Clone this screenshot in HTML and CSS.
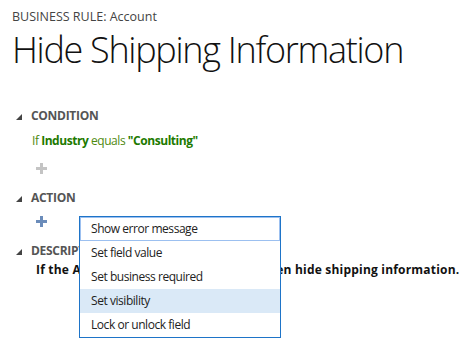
FILE: index.html
```html
<!DOCTYPE html>
<html>
<head>
  <title>Business Rule: Account</title>
  <link rel="stylesheet" href="styles.css">
</head>
<body>
  <div class="entity">BUSINESS RULE: Account</div>
  <h1>Hide Shipping Information</h1>

  <div class="section first">
    <div class="section-head"><span class="caret"></span>CONDITION</div>
    <div class="section-body">
      <p class="condition">If <b>Industry</b> equals <b>"Consulting"</b></p>
      <span class="plus plus-off"></span>
    </div>
  </div>

  <div class="section">
    <div class="section-head"><span class="caret"></span>ACTION</div>
    <div class="section-body action-body">
      <span class="plus plus-on"></span>
      <ul class="menu">
        <li class="focus">Show error message</li>
        <li>Set field value</li>
        <li>Set business required</li>
        <li class="hover">Set visibility</li>
        <li>Lock or unlock field</li>
      </ul>
    </div>
  </div>

  <div class="section">
    <div class="section-head"><span class="caret"></span>DESCRIPTION</div>
    <div class="section-body">
      <p class="description">If the Account industry is consulting then hide shipping information.</p>
    </div>
  </div>
</body>
</html>
```

FILE: styles.css
```css
html, body { height: 100%; }
body { margin: 0; padding: 9px 12px 0; box-sizing: border-box; font-family: "Open Sans", "Noto Sans", sans-serif; color: #333; background: #fff; }
.entity { font-size: 12.5px; color: #444; line-height: 16px; }
h1 { font-weight: 300; font-size: 36px; line-height: 44px; color: #111; margin: 3px 0 0; letter-spacing: -1.3px; }
.section-head { font-size: 12px; font-weight: 700; color: #555; line-height: 16px; display: flex; align-items: center; padding-left: 4px; letter-spacing: -0.3px; margin-top: 16px; }
.first .section-head { margin-top: 36px; }
.caret { width: 0; height: 0; border-left: 6px solid transparent; border-bottom: 6px solid #444; margin: 2px 9px 0 0; }
.section-body { padding-left: 20px; }
.condition { margin: 9px 0 0; font-size: 12px; line-height: 16px; color: #4f8a10; letter-spacing: -0.45px; }
.condition b { color: #1d7a00; }
.plus { display: block; position: relative; width: 11px; height: 11px; margin: 14px 0 0 4px; }
.plus::before, .plus::after { content: ""; position: absolute; background: currentColor; }
.plus::before { left: 4px; top: 0; width: 3px; height: 11px; }
.plus::after { left: 0; top: 4px; width: 11px; height: 3px; }
.plus-off { color: #c4c4c4; }
.plus-on { color: #6b8cba; }
.action-body { position: relative; padding-top: 10px; }
.action-body .plus { margin-top: 0; }
.description { margin: 3px 0 0 4px; font-size: 12px; font-weight: 700; color: #111; line-height: 16px; letter-spacing: 0.2px; }
.menu { position: absolute; left: 67px; top: 10px; width: 200px; margin: 0; padding: 0; list-style: none; background: #fff; border: 1px solid #1e74c8; z-index: 2; }
.menu li { font-size: 12px; line-height: 24px; height: 24px; padding-left: 11px; color: #222; box-sizing: border-box; letter-spacing: -0.45px; }
.menu .focus { border: 1px solid #9cc0f0; padding-left: 10px; line-height: 22px; }
.menu .hover { background: #dae9f7; }
```
